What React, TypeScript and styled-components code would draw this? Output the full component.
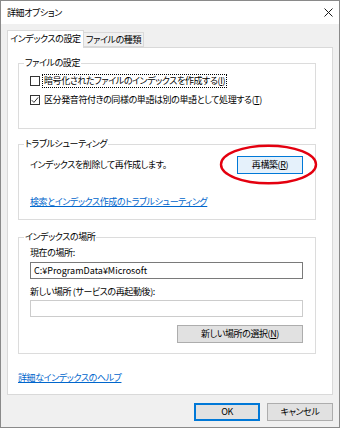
import styled, { createGlobalStyle } from "styled-components";

const GlobalStyle = createGlobalStyle`
  html, body {
    margin: 0;
    padding: 0;
    background: #ffffff;
  }
  body {
    font-family: "Noto Sans CJK JP", "Noto Sans", sans-serif;
    font-size: 9px;
    font-feature-settings: "palt";
    letter-spacing: -0.4px;
    color: #000;
  }
  * {
    box-sizing: border-box;
  }
`;

const Window = styled.div`
  position: relative;
  width: 340px;
  height: 428px;
  border: 1px solid #8a8a8a;
  background: #f0f0f0;
  display: flex;
  flex-direction: column;
`;

const TitleBar = styled.div`
  height: 23px;
  background: #ffffff;
  display: flex;
  align-items: center;
  justify-content: space-between;
  padding: 0 6px 0 6px;
  line-height: 12px;
`;

const CloseIcon = styled.svg`
  width: 9px;
  height: 9px;
`;

const Content = styled.div`
  padding: 6px 6px 0 6px;
  display: flex;
  flex-direction: column;
`;

const TabRow = styled.div`
  display: flex;
  align-items: flex-end;
  height: 17px;
`;

const Tab = styled.div<{ $active?: boolean; $width: number }>`
  position: relative;
  z-index: 1;
  width: ${(p) => p.$width}px;
  height: ${(p) => (p.$active ? 18 : 15)}px;
  margin-bottom: ${(p) => (p.$active ? -1 : 0)}px;
  margin-left: ${(p) => (p.$active ? 0 : -1)}px;
  background: ${(p) => (p.$active ? "#ffffff" : "#f0f0f0")};
  border: 1px solid #d9d9d9;
  border-bottom: ${(p) => (p.$active ? "none" : "1px solid #d9d9d9")};
  display: flex;
  align-items: center;
  justify-content: center;
  line-height: 12px;
  padding-bottom: ${(p) => (p.$active ? 1 : 0)}px;
`;

const Panel = styled.div`
  height: 348px;
  background: #ffffff;
  border: 1px solid #d9d9d9;
  padding: 9px 16px 0 10px;
  display: flex;
  flex-direction: column;
`;

const GroupBox = styled.fieldset<{ $top: number }>`
  margin: ${(p) => p.$top}px 0 0 0;
  padding: 0;
  min-width: 0;
  border: 1px solid #dcdcdc;
`;

const Legend = styled.legend`
  margin-left: 5px;
  padding: 0 1px;
  line-height: 12px;
  font-size: 9px;
`;

const GroupBody = styled.div<{ $pt: number; $pb: number; $gap?: number }>`
  padding: ${(p) => p.$pt}px 12px ${(p) => p.$pb}px 11px;
  display: flex;
  flex-direction: column;
  gap: ${(p) => p.$gap ?? 0}px;
`;

const CheckRow = styled.label`
  display: flex;
  align-items: center;
  height: 14px;
  line-height: 12px;
`;

const Box = styled.span`
  width: 10px;
  height: 10px;
  border: 1px solid #333333;
  background: #ffffff;
  display: flex;
  align-items: center;
  justify-content: center;
  margin-right: 2px;
  flex: none;
`;

const CheckText = styled.span<{ $focused?: boolean }>`
  padding: 0 1px;
  border: 1px dotted ${(p) => (p.$focused ? "#000" : "transparent")};
  line-height: 12px;
  white-space: nowrap;
`;

const Row = styled.div`
  display: flex;
  align-items: center;
  justify-content: space-between;
  line-height: 12px;
`;

const Text = styled.div<{ $mt?: number }>`
  line-height: 12px;
  margin-top: ${(p) => p.$mt ?? 0}px;
  white-space: nowrap;
`;

const Link = styled.a<{ $mt?: number }>`
  display: block;
  align-self: flex-start;
  color: #0066cc;
  text-decoration: underline;
  line-height: 12px;
  margin-top: ${(p) => p.$mt ?? 0}px;
  white-space: nowrap;
  cursor: pointer;
`;

const Button = styled.button<{
  $variant?: "hover" | "default" | "normal";
  $width: number;
  $mt?: number;
}>`
  width: ${(p) => p.$width}px;
  height: 18px;
  margin-top: ${(p) => p.$mt ?? 0}px;
  padding: 0;
  font-family: inherit;
  font-size: 9px;
  font-feature-settings: "palt";
  letter-spacing: -0.4px;
  line-height: 12px;
  color: #000;
  background: ${(p) => (p.$variant === "hover" ? "#e5f1fb" : "#e1e1e1")};
  border: 1px solid
    ${(p) => (p.$variant === "normal" ? "#adadad" : "#0078d7")};
  box-shadow: ${(p) =>
    p.$variant === "default" ? "inset 0 0 0 1px #0078d7" : "none"};
  flex: none;
`;

const TextBox = styled.div<{ $disabled?: boolean; $mt?: number }>`
  height: 17px;
  margin-top: ${(p) => p.$mt ?? 0}px;
  border: 1px solid ${(p) => (p.$disabled ? "#cccccc" : "#7a7a7a")};
  background: #ffffff;
  padding: 0 3px;
  display: flex;
  align-items: center;
  line-height: 12px;
  letter-spacing: 0;
  white-space: nowrap;
`;

const RightButton = styled.div`
  display: flex;
  justify-content: flex-end;
`;

const Footer = styled.div`
  display: flex;
  justify-content: flex-end;
  gap: 7px;
  margin-top: 8px;
`;

const Annotation = styled.svg`
  position: absolute;
  left: 218px;
  top: 143px;
  width: 99px;
  height: 41px;
  pointer-events: none;
`;

export default function App() {
  return (
    <>
      <GlobalStyle />
      <Window>
        <TitleBar>
          <span>詳細オプション</span>
          <CloseIcon viewBox="0 0 9 9">
            <path d="M0.5 0.5 L8.5 8.5 M8.5 0.5 L0.5 8.5" stroke="#1a1a1a" strokeWidth="1" fill="none" />
          </CloseIcon>
        </TitleBar>
        <Content>
          <TabRow>
            <Tab $active $width={77}>インデックスの設定</Tab>
            <Tab $width={61}>ファイルの種類</Tab>
          </TabRow>
          <Panel>
            <GroupBox $top={0}>
              <Legend>ファイルの設定</Legend>
              <GroupBody $pt={5} $pb={21} $gap={5}>
                <CheckRow>
                  <Box />
                  <CheckText $focused>
                    暗号化されたファイルのインデックスを作成する(<u>I</u>)
                  </CheckText>
                </CheckRow>
                <CheckRow>
                  <Box>
                    <svg width="8" height="8" viewBox="0 0 8 8">
                      <polyline points="0.8,4.2 2.9,6.4 7.2,1.4" stroke="#333" strokeWidth="1" fill="none" />
                    </svg>
                  </Box>
                  <CheckText>
                    区分発音符付きの同様の単語は別の単語として処理する(<u>T</u>)
                  </CheckText>
                </CheckRow>
              </GroupBody>
            </GroupBox>

            <GroupBox $top={9}>
              <Legend>トラブルシューティング</Legend>
              <GroupBody $pt={6} $pb={11}>
                <Row>
                  <Text>インデックスを削除して再作成します。</Text>
                  <Button $variant="hover" $width={66}>
                    再構築(<u>R</u>)
                  </Button>
                </Row>
                <Link $mt={22}>検索とインデックス作成のトラブルシューティング</Link>
              </GroupBody>
            </GroupBox>

            <GroupBox $top={11}>
              <Legend>インデックスの場所</Legend>
              <GroupBody $pt={4} $pb={10}>
                <Text>現在の場所:</Text>
                <TextBox $mt={3}>C:¥ProgramData¥Microsoft</TextBox>
                <Text $mt={7}>新しい場所 (サービスの再起動後):</Text>
                <TextBox $disabled $mt={2} />
                <RightButton>
                  <Button $variant="normal" $width={126} $mt={8}>
                    新しい場所の選択(<u>N</u>)
                  </Button>
                </RightButton>
              </GroupBody>
            </GroupBox>

            <Link $mt={18}>詳細なインデックスのヘルプ</Link>
          </Panel>
          <Footer>
            <Button $variant="default" $width={66}>OK</Button>
            <Button $variant="normal" $width={66}>キャンセル</Button>
          </Footer>
        </Content>
        <Annotation viewBox="0 0 99 41">
          <ellipse cx="49.5" cy="20.5" rx="47.5" ry="18.8" stroke="#e4000f" strokeWidth="2.4" fill="none" />
        </Annotation>
      </Window>
    </>
  );
}
